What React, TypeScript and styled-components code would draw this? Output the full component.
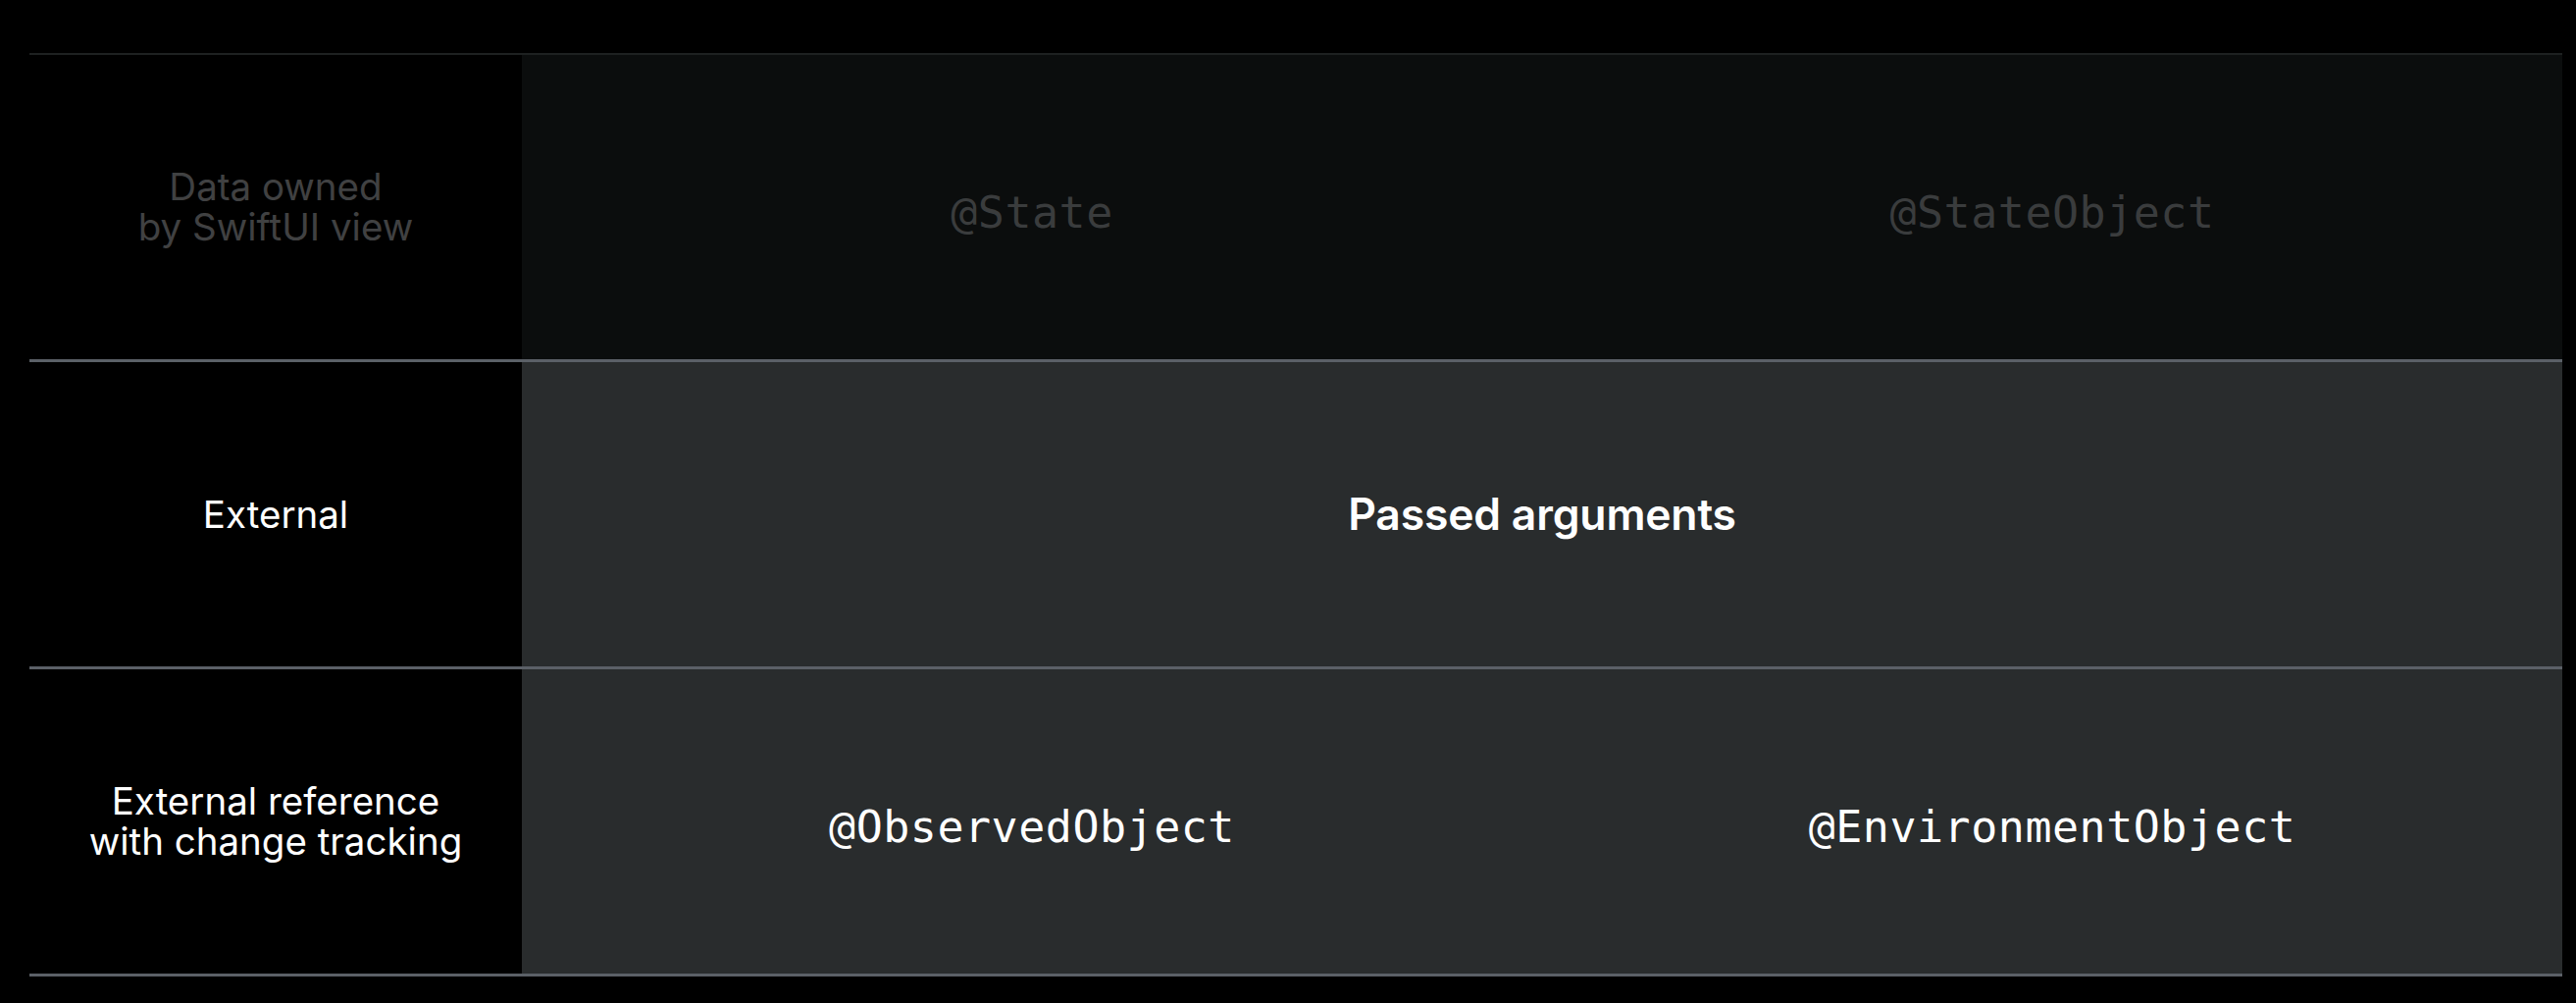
import React from "react";
import styled, { createGlobalStyle } from "styled-components";

const Global = createGlobalStyle`
  html, body {
    margin: 0;
    padding: 0;
    background: #000000;
    overflow: hidden;
  }
  body {
    font-family: "Inter", "Noto Sans", sans-serif;
  }
`;

const Page = styled.div`
  width: 2626px;
  height: 1022px;
  background: #000000;
  padding: 54px 14px 0 30px;
  box-sizing: border-box;
`;

const Table = styled.div`
  display: flex;
  flex-direction: column;
  border-top: 2px solid #1e2121;
`;

const Row = styled.div`
  display: grid;
  grid-template-columns: 502px 1fr 1fr;
  height: 310px;
  border-bottom: 3px solid #5b6067;
`;

const Label = styled.div<{ $dim?: boolean }>`
  display: flex;
  align-items: center;
  justify-content: center;
  text-align: center;
  background: #000000;
  color: ${(p) => (p.$dim ? "#404142" : "#ffffff")};
  font-family: "Inter", "Noto Sans", sans-serif;
  font-size: 38.5px;
  line-height: 41px;
  letter-spacing: 0px;
  font-weight: 400;
`;

const Cell = styled.div<{ $dim?: boolean; $span?: boolean }>`
  display: flex;
  align-items: center;
  justify-content: center;
  background: ${(p) => (p.$dim ? "#0b0d0d" : "#292c2d")};
  grid-column: ${(p) => (p.$span ? "2 / 4" : "auto")};
`;

const Code = styled.span<{ $dim?: boolean }>`
  font-family: "DejaVu Sans Mono", "Liberation Mono", monospace;
  font-size: 45px;
  color: ${(p) => (p.$dim ? "#3a3c3d" : "#ffffff")};
  letter-spacing: 0.5px;
  padding-top: 10px;
`;

const Heading = styled.span`
  font-family: "Inter", "Noto Sans", sans-serif;
  font-size: 44.5px;
  font-weight: 600;
  letter-spacing: -0.2px;
  color: #ffffff;
`;

export default function App() {
  return (
    <>
      <Global />
      <Page>
        <Table>
          <Row>
            <Label $dim>
              Data owned
              <br />
              by SwiftUI view
            </Label>
            <Cell $dim>
              <Code $dim>@State</Code>
            </Cell>
            <Cell $dim>
              <Code $dim>@StateObject</Code>
            </Cell>
          </Row>
          <Row>
            <Label>External</Label>
            <Cell $span>
              <Heading>Passed arguments</Heading>
            </Cell>
          </Row>
          <Row>
            <Label>
              External reference
              <br />
              with change tracking
            </Label>
            <Cell>
              <Code>@ObservedObject</Code>
            </Cell>
            <Cell>
              <Code>@EnvironmentObject</Code>
            </Cell>
          </Row>
        </Table>
      </Page>
    </>
  );
}
